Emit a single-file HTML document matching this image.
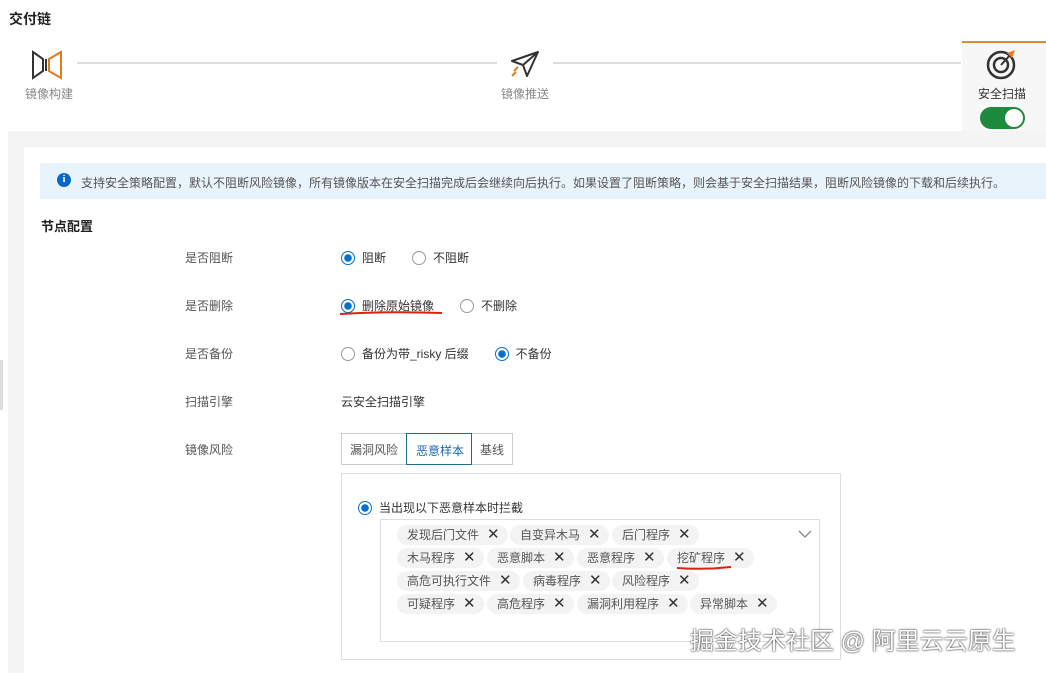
<!DOCTYPE html>
<html><head><meta charset="utf-8"><style>
*{box-sizing:border-box;margin:0;padding:0}
body{width:1046px;height:673px;overflow:hidden;background:#fff;font-family:"Liberation Sans","Noto Sans CJK SC",sans-serif;font-size:12px;color:#333;position:relative}
.a{position:absolute}
.lbl{color:#555}
.radio{display:inline-block;width:14px;height:14px;border:1px solid #999;border-radius:50%;vertical-align:-3px;margin-right:7px;background:#fff}
.radio.on{border:1px solid #0070cc;background:radial-gradient(circle,#0070cc 0 3.5px,#fff 4px)}
.tag{position:absolute;height:20px;line-height:20px;background:#f3f3f3;border-radius:10px;padding:0 8px 0 10px;color:#555;white-space:nowrap}
.tag b{font-weight:normal;font-size:15px;margin-left:8px;color:#333}
</style></head><body>
<div class="a" style="left:9px;top:9px;font-size:14px;font-weight:bold;color:#222">交付链</div>
<div class="a" style="left:77px;top:62px;width:420px;height:2px;background:#ddd"></div>
<div class="a" style="left:553px;top:62px;width:408px;height:2px;background:#ddd"></div>
<svg class="a" style="left:30px;top:50px" width="34" height="30" viewBox="0 0 34 30"><path d="M3 2 L13 9 V21 L3 28 Z" fill="none" stroke="#333" stroke-width="2"/><path d="M16 9 V21" stroke="#333" stroke-width="2"/><path d="M31 2 L19 9 V21 L31 28 Z" fill="none" stroke="#e07b20" stroke-width="2"/></svg>
<div class="a lbl" style="left:25px;top:85px;color:#888">镜像构建</div>
<svg class="a" style="left:509px;top:50px" width="32" height="30" viewBox="0 0 32 30"><path d="M29 2 L3 11 L14 15 L18 26 Z M14 15 L29 2" fill="none" stroke="#333" stroke-width="2" stroke-linejoin="round"/><path d="M5 21 l4-4 M3 26 l4-4" stroke="#e07b20" stroke-width="2"/></svg>
<div class="a lbl" style="left:501px;top:85px;color:#888">镜像推送</div>
<div class="a" style="left:962px;top:41px;width:84px;height:90px;background:#f7f7f7;border-top:2px solid #e08a2a"></div>
<svg class="a" style="left:985px;top:48px" width="34" height="32" viewBox="0 0 34 32"><circle cx="16" cy="17" r="13" fill="none" stroke="#333" stroke-width="2.5"/><circle cx="16" cy="17" r="7" fill="none" stroke="#333" stroke-width="2.5"/><path d="M16 17 L26 6" stroke="#333" stroke-width="2"/><path d="M22 5 L30 2 L27 10 Z" fill="#e8782a"/></svg>
<div class="a" style="left:978px;top:85px;color:#333">安全扫描</div>
<div class="a" style="left:980px;top:107px;width:45px;height:22px;border-radius:11px;background:#1e8a3e"><div style="position:absolute;right:2px;top:2px;width:18px;height:18px;border-radius:50%;background:#fff"></div></div>
<div class="a" style="left:8px;top:131px;width:1038px;height:542px;background:#f4f4f4"></div>
<div class="a" style="left:24px;top:147px;width:1022px;height:526px;background:#fff"></div>
<div class="a" style="left:0;top:360px;width:3px;height:50px;background:#ddd"></div>
<div class="a" style="left:40px;top:163px;width:1006px;height:36px;background:#e8f3fc"></div>
<div class="a" style="left:57px;top:173px;width:14px;height:14px;border-radius:50%;background:#0a68c4;color:#fff;font-size:10px;font-weight:bold;text-align:center;line-height:14px;font-family:'Liberation Serif',serif">i</div>
<div class="a" style="left:81px;top:174px;color:#555">支持安全策略配置，默认不阻断风险镜像，所有镜像版本在安全扫描完成后会继续向后执行。如果设置了阻断策略，则会基于安全扫描结果，阻断风险镜像的下载和后续执行。</div>
<div class="a" style="left:41px;top:216px;font-size:13px;font-weight:bold;color:#222">节点配置</div>
<div class="a lbl" style="left:185px;top:249px">是否阻断</div>
<div class="a" style="left:341px;top:249px"><span class="radio on"></span>阻断<span style="display:inline-block;width:26px"></span><span class="radio"></span>不阻断</div>
<div class="a lbl" style="left:185px;top:297px">是否删除</div>
<div class="a" style="left:341px;top:297px"><span class="radio on"></span>删除原始镜像<span style="display:inline-block;width:26px"></span><span class="radio"></span>不删除</div>
<svg class="a" style="left:338px;top:309px" width="106" height="8"><path d="M2 5 Q50 2 104 4" stroke="#d21" stroke-width="2" fill="none"/></svg>
<div class="a lbl" style="left:185px;top:345px">是否备份</div>
<div class="a" style="left:341px;top:345px"><span class="radio"></span>备份为带_risky 后缀<span style="display:inline-block;width:26px"></span><span class="radio on"></span>不备份</div>
<div class="a lbl" style="left:185px;top:393px">扫描引擎</div>
<div class="a" style="left:341px;top:393px">云安全扫描引擎</div>
<div class="a lbl" style="left:185px;top:441px">镜像风险</div>
<div class="a" style="left:341px;top:433px;width:172px;height:32px;border:1px solid #ccc"></div>
<div class="a" style="left:350px;top:441px;color:#555">漏洞风险</div>
<div class="a" style="left:406px;top:433px;width:66px;height:32px;border:1px solid #1f6f8b;color:#1a6ab0;padding:8px 0 0 9px">恶意样本</div>
<div class="a" style="left:480px;top:441px;color:#555">基线</div>
<div class="a" style="left:341px;top:473px;width:500px;height:187px;border:1px solid #ddd"></div>
<div class="a" style="left:358px;top:499px"><span class="radio on"></span>当出现以下恶意样本时拦截</div>
<div class="a" style="left:380px;top:519px;width:440px;height:123px;border:1px solid #ddd"></div>
<svg class="a" style="left:798px;top:529px" width="14" height="10"><path d="M1 2 L7 8 L13 2" stroke="#888" stroke-width="1.3" fill="none"/></svg>
<div class="tag" style="left:397px;top:525px">发现后门文件<b>✕</b></div>
<div class="tag" style="left:510px;top:525px">自变异木马<b>✕</b></div>
<div class="tag" style="left:612px;top:525px">后门程序<b>✕</b></div>
<div class="tag" style="left:397px;top:548px">木马程序<b>✕</b></div>
<div class="tag" style="left:487px;top:548px">恶意脚本<b>✕</b></div>
<div class="tag" style="left:577px;top:548px">恶意程序<b>✕</b></div>
<div class="tag" style="left:667px;top:548px">挖矿程序<b>✕</b></div>
<svg class="a" style="left:676px;top:565px" width="56" height="6"><path d="M1 3 Q28 5 55 2" stroke="#d21" stroke-width="2" fill="none"/></svg>
<div class="tag" style="left:397px;top:571px">高危可执行文件<b>✕</b></div>
<div class="tag" style="left:523px;top:571px">病毒程序<b>✕</b></div>
<div class="tag" style="left:612px;top:571px">风险程序<b>✕</b></div>
<div class="tag" style="left:397px;top:594px">可疑程序<b>✕</b></div>
<div class="tag" style="left:487px;top:594px">高危程序<b>✕</b></div>
<div class="tag" style="left:577px;top:594px">漏洞利用程序<b>✕</b></div>
<div class="tag" style="left:690px;top:594px">异常脚本<b>✕</b></div>
<div class="a" style="left:690px;top:621px;font-size:24px;color:#fff;text-shadow:0 0 2px #333,0 0 1px #333;white-space:nowrap">掘金技术社区 @ 阿里云云原生</div>
</body></html>
